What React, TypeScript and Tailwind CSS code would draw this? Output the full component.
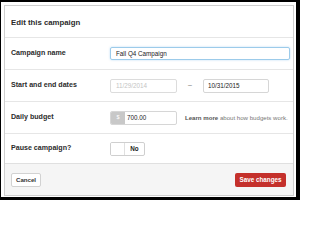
import React from "react";

const font = { fontFamily: '"Liberation Sans", Arial, Helvetica, sans-serif' };

function Row({ label, children, last }: { label: string; children: React.ReactNode; last?: boolean }) {
  return (
    <div
      className={`grid grid-cols-[105px_1fr] items-center ${
        last ? "h-[29px]" : "h-[32px] border-b border-[#e6e6e6]"
      }`}
    >
      <div className="pl-[6px] text-[7.1px] font-bold text-[#2b2b2b]">{label}</div>
      <div className="flex items-center">{children}</div>
    </div>
  );
}

export default function App() {
  return (
    <div
      className="h-[200px] w-[300px] bg-black pt-[2px] pl-[1px] pr-[4px] pb-[3px]"
      style={font}
    >
      <div className="h-full w-full bg-white pt-[3px] pl-[3px] pr-[2px] pb-[1px]">
        <div className="flex h-full flex-col border border-[#cfcfcf]">
          {/* header */}
          <div className="flex h-[32px] items-center border-b border-[#e6e6e6] pl-[6px] pt-[2px]">
            <h1 className="text-[7.8px] font-bold text-[#2b2b2b]">Edit this campaign</h1>
          </div>

          <Row label="Campaign name">
            <div className="flex h-[13px] w-[180px] items-center rounded-[2px] border border-[#9ccbea] pl-[5px] text-[6.3px] text-[#222] shadow-[0_0_2px_rgba(102,175,233,0.5)]">
              Fall Q4 Campaign
            </div>
          </Row>

          <Row label="Start and end dates">
            <div className="flex h-[14px] w-[67px] items-center rounded-[2px] border border-[#dcdcdc] pl-[5px] text-[6.3px] text-[#c4c4c4]">
              11/29/2014
            </div>
            <div className="flex w-[26px] justify-center text-[7px] text-[#777]">–</div>
            <div className="flex h-[14px] w-[66px] items-center rounded-[2px] border border-[#d6d6d6] pl-[4px] text-[6.3px] text-[#222]">
              10/31/2015
            </div>
          </Row>

          <Row label="Daily budget">
            <div className="flex h-[14px] w-[67px] items-stretch overflow-hidden rounded-[2px] border border-[#d6d6d6]">
              <div className="flex w-[14px] items-center justify-center bg-[#c8c8c8] text-[5.5px] text-white">
                $
              </div>
              <div className="flex items-center pl-[2px] text-[6.3px] text-[#222]">700.00</div>
            </div>
            <div className="pl-[8px] text-[6.1px] text-[#777]">
              <span className="font-bold text-[#555]">Learn more</span> about how budgets work.
            </div>
          </Row>

          <Row label="Pause campaign?" last>
            <div className="flex h-[14px] w-[35px] overflow-hidden rounded-[2px] border border-[#cfcfcf]">
              <div className="w-[14px] border-r border-[#e0e0e0] bg-white" />
              <div className="flex flex-1 items-center justify-center text-[6.3px] font-bold text-[#222]">
                No
              </div>
            </div>
          </Row>

          {/* footer */}
          <div className="flex flex-1 items-center justify-between border-t border-[#e0e0e0] bg-[#f5f5f5] pl-[6px] pr-[7px]">
            <button
              type="button"
              className="flex h-[14px] w-[30px] items-center justify-center rounded-[2px] border border-[#d2d2d2] bg-white text-[6.1px] font-bold text-[#333]"
            >
              Cancel
            </button>
            <button
              type="button"
              className="flex h-[14px] w-[51px] items-center justify-center rounded-[2px] bg-[#c4302b] text-[6.3px] font-bold text-white"
            >
              Save changes
            </button>
          </div>
        </div>
      </div>
    </div>
  );
}
